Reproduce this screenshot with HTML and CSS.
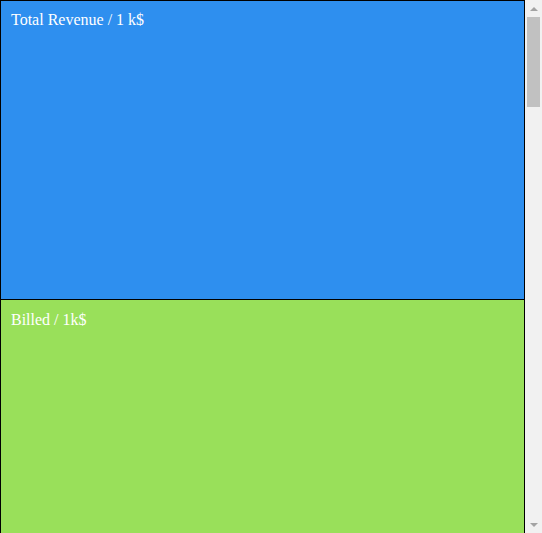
FILE: index.html
```html
<!DOCTYPE html>
<html>
<head>
<meta charset="utf-8">
<link rel="stylesheet" href="styles.css">
</head>
<body>
<div class="window">
  <div class="panels">
    <div class="panel blue"><div class="title">Total Revenue / 1 k$</div></div>
    <div class="panel green"><div class="title">Billed / 1k$</div></div>
  </div>
  <div class="scrollbar">
    <div class="sb-btn"><span class="arrow up"></span></div>
    <div class="sb-track"><div class="sb-thumb"></div></div>
    <div class="sb-btn"><span class="arrow down"></span></div>
  </div>
</div>
</body>
</html>
```
FILE: styles.css
```css
html, body {
  margin: 0;
  padding: 0;
  height: 100%;
  overflow: hidden;
  background: #ffffff;
}
.window {
  display: flex;
  height: 100%;
}
.panels {
  flex: 1;
  display: flex;
  flex-direction: column;
  overflow: hidden;
}
.panel {
  box-sizing: border-box;
  flex: 0 0 300px;
  height: 300px;
  border: 1px solid #000;
  padding: 10px 10px;
}
.panel + .panel {
  border-top: none;
  padding-top: 11px;
}
.title {
  font-family: "Liberation Serif", "Times New Roman", serif;
  font-size: 16px;
  color: #ffffff;
}
.blue { background: #2e8fef; }
.green { background: #99e05a; }

.scrollbar {
  flex: 0 0 17px;
  width: 17px;
  background: #f1f1f1;
  display: flex;
  flex-direction: column;
}
.sb-btn {
  flex: 0 0 17px;
  height: 17px;
  display: flex;
  align-items: center;
  justify-content: center;
}
.sb-track {
  flex: 1;
  display: flex;
  flex-direction: column;
  padding: 0 2px;
}
.sb-thumb {
  height: 90px;
  background: #c1c1c1;
}
.arrow {
  width: 0;
  height: 0;
  border-left: 4px solid transparent;
  border-right: 4px solid transparent;
}
.arrow.up {
  border-bottom: 4px solid #a3a3a3;
}
.arrow.down {
  border-top: 4px solid #a3a3a3;
}
```
